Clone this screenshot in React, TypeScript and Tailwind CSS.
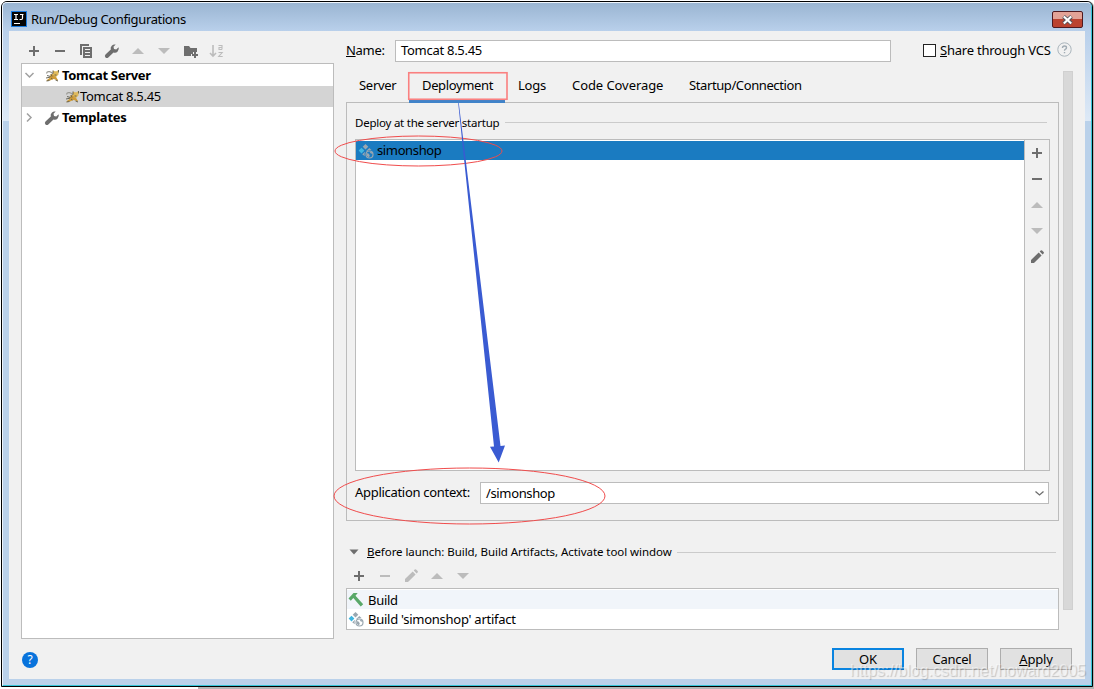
import React from "react";

function T({ className = "tracking-[-0.28px]", children }: { className?: string; children: React.ReactNode }) {
  return <span className={"block whitespace-nowrap " + className}>{children}</span>;
}

function Plus({ className = "text-[#6e6e6e]" }: { className?: string }) {
  return (
    <svg width="16" height="16" viewBox="0 0 16 16" className={className} shapeRendering="crispEdges">
      <path d="M7 3h2v4h4v2H9v4H7V9H3V7h4z" fill="currentColor" />
    </svg>
  );
}
function Minus({ className = "text-[#6e6e6e]" }: { className?: string }) {
  return (
    <svg width="16" height="16" viewBox="0 0 16 16" className={className} shapeRendering="crispEdges">
      <path d="M3 7h10v2H3z" fill="currentColor" />
    </svg>
  );
}
function Up() {
  return (
    <svg width="16" height="16" viewBox="0 0 16 16">
      <path d="M8 5l6 6H2z" fill="#bcbcbc" />
    </svg>
  );
}
function Down() {
  return (
    <svg width="16" height="16" viewBox="0 0 16 16">
      <path d="M8 11L2 5h12z" fill="#bcbcbc" />
    </svg>
  );
}
function Pencil({ className = "text-[#6e6e6e]" }: { className?: string }) {
  return (
    <svg width="16" height="16" viewBox="0 0 16 16" className={className}>
      <path d="M9.700 3.500l2.900 2.900-7.600 7.600H2v-3zM10.700 2.600l1-1a1 1 0 011.400 0l1.500 1.500a1 1 0 010 1.400l-1 1z" fill="currentColor" />
    </svg>
  );
}
function Copy() {
  return (
    <svg width="16" height="16" viewBox="0 0 16 16" fill="#6e6e6e" shapeRendering="crispEdges">
      <path d="M2 1h9v2H4v9H2z" />
      <path fillRule="evenodd" d="M5 4h9v11H5zM7 6v1h5V6zm0 3v1h5V9zm0 3v1h5v-1z" />
    </svg>
  );
}
function Wrench() {
  return (
    <svg width="16" height="16" viewBox="0 0 16 16">
      <path d="M14.600 4.300l-2.400 2.200-2.200-.5-.500-2.200 2.200-2.200A4 4 0 006.800 6.600L1.500 11.600a1.900 1.900 0 002.800 2.800l5.200-5a4 4 0 005.100-5.100z" fill="#6e6e6e" />
    </svg>
  );
}
function FolderPlus() {
  return (
    <svg width="16" height="16" viewBox="0 0 16 16" className="ml-px" fill="#6e6e6e">
      <path d="M1 3h5l1.500 2H14v4h-4v2H8v2H1z" />
      <path d="M11 9h2v2h2v2h-2v2h-2v-2H9v-2h2z" />
    </svg>
  );
}
function SortAZ() {
  return (
    <svg width="16" height="16" viewBox="0 0 16 16">
      <path d="M4 2v11M1 10l3 3.200L7 10" fill="none" stroke="#bcbcbc" strokeWidth="1.600" />
      <path d="M9.500 2.500h3.500v4M13.200 4.500H10v2h3M9.500 9.500h3.700L9.700 13.500h4" fill="none" stroke="#bcbcbc" strokeWidth="1.100" />
    </svg>
  );
}
function Tomcat() {
  return (
    <svg width="14" height="14" viewBox="0 0 14 14">
      <path d="M1.500 4.500Q2 2.200 4.500 2.700T8 5" stroke="#9a9a94" fill="none" strokeWidth="1.200" />
      <path d="M5.500 5.500L8 5l3 2 .500 1.800 1.500 2.200-.5.800-2-1.300-2-.5L5 11.500l-3 .5-.500-.8L4.500 9z" fill="#cf9c38" />
      <path d="M8 1.500l1.600.8h2L13.500 1v4.500L11.500 7.500H9.800L8 5.500z" fill="#dfb95a" />
      <path d="M8 1.500v3M13.500 1v2.500M2 6.500l3.500 1M1 9l4-.8M1.500 12l3-.5M10.500 11l2.500 1M6 5l1 2.500M9.500 6h2M7.500 10L6 9" stroke="#5c5a4c" strokeWidth=".9" fill="none" />
    </svg>
  );
}
function Artifact() {
  return (
    <svg width="16" height="16" viewBox="0 0 16 16">
      <path d="M7.500 1l2.800 2.800-2.800 2.800-2.800-2.800z" fill="#9aa7b0" />
      <path d="M3.500 4.700l2.900 2.900-2.900 2.900L.600 7.600z" fill="#40b6e0" />
      <path d="M11.300 5l2.200 2-3 .3-2 1.200-.3-.5z" fill="#9aa7b0" />
      <path d="M7.200 8.800l-.7 2.200.3 2.200-2.600-2z" fill="#9aa7b0" />
      <circle cx="11.500" cy="11.500" r="3.500" fill="none" stroke="#9aa7b0" strokeWidth="1.200" />
      <path d="M8.500 10l2 .6 1.300 1.600-.8 2.300-2-1.500zM11.500 8.500l1 1.800 2 .7.300-1.500z" fill="#9aa7b0" />
    </svg>
  );
}
function Hammer() {
  return (
    <svg width="16" height="16" viewBox="0 0 16 16">
      <path d="M.500 6.500L5.500 1h4.200L7.500 3.700l7.700 8.600-2.500 2.200L5.300 6 2.800 8.800z" fill="#59a869" />
    </svg>
  );
}
function Rule({ className = "" }: { className?: string }) {
  return <div className={"h-px shrink-0 bg-[#cbcbcb] " + className} />;
}

export default function App() {
  return (
    <div className="relative flex h-[689px] w-[1094px] flex-col overflow-hidden bg-white pl-px pt-px font-['Noto_Sans',sans-serif] text-[13px] leading-[18px] text-black">
      <div className="flex h-[686px] w-[1092px] shrink-0 flex-col rounded-t-[6px] border border-black bg-[#bad1ea] shadow-[1px_0_0_#b4b4b4]">
        <div className="flex h-[684px] flex-col rounded-t-[5px] border border-b-[#36c6d9] border-l-[#eef4fb] border-r-[#36c6d9] border-t-[#eef4fb]">
          <div className="flex h-[28px] shrink-0 items-center rounded-t-[4px] bg-gradient-to-b from-[#9ab5d2] to-[#b9d0eb] px-2">
            <svg width="16" height="16" viewBox="0 0 16 16" className="mt-[3px]">
              <path d="M0 0h16v16H0z" fill="#1a7be0" />
              <path d="M1 1h14v14H1z" fill="#050505" />
              <path d="M3 3.500h4M5 3.500v5M3 8.500h4M9 3.500h3.500M11.500 3.500v3.800q0 1.200-1.200 1.200H8.500M3 12.500h6" stroke="#fff" strokeWidth="1.200" fill="none" />
            </svg>
            <T className="ml-1 mt-[3px] tracking-[-0.37px]">Run/Debug Configurations</T>
            <div className="ml-auto mt-[5px] flex h-[17px] w-[31px] items-center justify-center rounded-[2px] border border-[#4f1a20] bg-gradient-to-b from-[#e3a397] from-45% to-[#bb4330] to-50%">
              <svg width="13" height="10" viewBox="0 0 13 10">
                <path d="M2.500 1.500l8 7M10.500 1.500l-8 7" stroke="#54565f" strokeWidth="4" />
                <path d="M2.800 1.500l7.400 7M10.200 1.500l-7.400 7" stroke="#fff" strokeWidth="2.200" />
              </svg>
            </div>
          </div>
          <div className="flex h-[654px] w-full">
            <div className="h-[90px] w-[6px] shrink-0 bg-gradient-to-b from-[#b9d0eb] to-[#dde9f6]" />
            <div className="flex h-[648px] w-[1076px] flex-col bg-[#f1f1f1]">
              <div className="flex h-[608px]">
                <div className="ml-3 flex w-[313px] flex-col">
                  <div className="flex h-8 items-center gap-[10px] pl-[5px] pt-[7px]">
                    <Plus /><Minus /><Copy /><Wrench /><Up /><Down /><FolderPlus /><SortAZ />
                  </div>
                  <div className="flex h-[576px] flex-col border border-[#bcbcbc] bg-white pt-px">
                    <div className="flex h-[21px] items-center pl-[2px]">
                      <svg width="11" height="11" viewBox="0 0 11 11"><path d="M1.500 3l4 4 4-4" fill="none" stroke="#a0a0a0" strokeWidth="1.500" /></svg>
                      <span className="ml-[10px]"><Tomcat /></span>
                      <T className="-mt-[2px] ml-[3px] font-bold tracking-[-0.3px]">Tomcat Server</T>
                    </div>
                    <div className="flex h-[21px] items-center bg-[#d4d4d4] pl-[43px]">
                      <Tomcat />
                      <T className="-mt-[2px] ml-px tracking-[-0.28px]">Tomcat 8.5.45</T>
                    </div>
                    <div className="flex h-[21px] items-center pl-[2px]">
                      <svg width="11" height="11" viewBox="0 0 11 11"><path d="M3 1.500l4 4-4 4" fill="none" stroke="#a0a0a0" strokeWidth="1.500" /></svg>
                      <span className="ml-[9px]"><Wrench /></span>
                      <T className="-mt-[2px] ml-[2px] font-bold tracking-[-0.25px]">Templates</T>
                    </div>
                  </div>
                </div>
                <div className="ml-3 flex w-[739px] flex-col">
                  <div className="flex h-[40px] shrink-0 items-start pt-[9px]">
                    <T className="w-[49px] pt-px tracking-[-0.3px]"><u>N</u>ame:</T>
                    <div className="h-[22px] w-[496px] border border-[#bcbcbc] bg-white pl-[5px]"><T>Tomcat 8.5.45</T></div>
                    <div className="ml-8 mt-1 h-[13px] w-[13px] border border-[#222] bg-white" />
                    <T className="ml-1 w-[117px] pt-px tracking-[-0.23px]"><u>S</u>hare through VCS</T>
                    <svg width="15" height="15" viewBox="0 0 15 15" className="mt-[2px]">
                      <circle cx="7.500" cy="7.500" r="6.700" fill="none" stroke="#a9b4bb" strokeWidth="1" />
                      <path d="M5.500 6q0-2 2-2t2 1.700q0 1-1 1.500t-1 1.500M7.500 10v1.300" fill="none" stroke="#a0abb3" strokeWidth="1.400" />
                    </svg>
                  </div>
                  <div className="flex h-[559px] items-start">
                    <div className="flex h-[559px] w-[713px] flex-col">
                      <div className="flex h-[31px] shrink-0 pt-[5px]">
                        <T className="ml-[13px] w-[50px] tracking-[-0.28px]">Server</T>
                        <div className="relative h-[27px] w-[96px] border-b-3 border-[#4083c9] pl-[13px]"><T className="tracking-[-0.36px]">Deployment</T></div>
                        <T className="ml-[13px] w-[54px] tracking-[-0.2px]">Logs</T>
                        <T className="w-[117px] tracking-[-0.07px]">Code Coverage</T>
                        <T className="tracking-[-0.4px]">Startup/Connection</T>
                      </div>
                      <div className="flex h-[419px] shrink-0 flex-col border border-[#bcbcbc] px-2">
                        <div className="flex h-9 shrink-0 items-center">
                          <T className="mt-[3px] w-[150px] text-[11.5px] tracking-[-0.23px]">Deploy at the server startup</T>
                          <Rule className="mt-[3px] w-[542px]" />
                        </div>
                        <div className="flex h-[332px] w-[695px] shrink-0 border border-[#bcbcbc]">
                          <div className="w-[668px] bg-white pt-px">
                            <div className="flex h-[19px] items-center bg-[#1a7bc1] pl-[2px]">
                              <Artifact />
                              <T className="-mt-px ml-[3px] tracking-[-0.37px]">simonshop</T>
                            </div>
                          </div>
                          <div className="flex w-[25px] flex-col items-center gap-[10px] border-l border-[#bcbcbc] pt-[5px]">
                            <Plus /><Minus /><Up /><Down /><Pencil />
                          </div>
                        </div>
                        <div className="mt-[11px] flex h-[22px]">
                          <T className="w-[125px] pt-px tracking-[-0.3px]">Application context:</T>
                          <div className="flex h-[22px] w-[569px] items-center justify-between border border-[#bcbcbc] bg-white pl-[5px] pr-[3px]">
                            <T className="-mt-px tracking-[-0.36px]">/simonshop</T>
                            <svg width="11" height="9" viewBox="0 0 11 9"><path d="M1.500 2.500l4 3.500 4-3.500" fill="none" stroke="#6e6e6e" strokeWidth="1.300" /></svg>
                          </div>
                        </div>
                      </div>
                      <div className="mt-[21px] flex h-[20px] items-center">
                        <svg width="16" height="16" viewBox="0 0 16 16"><path d="M3.500 5.500h9L8 10.500z" fill="#6e6e6e" /></svg>
                        <T className="ml-[5px] w-[310px] text-[11.5px] tracking-[-0.06px]"><u>B</u>efore launch: Build, Build Artifacts, Activate tool window</T>
                        <Rule className="w-[379px]" />
                      </div>
                      <div className="flex h-[26px] items-center gap-[10px] pl-[5px] pt-[2px]">
                        <Plus /><Minus className="text-[#bcbcbc]" /><Pencil className="text-[#bcbcbc]" /><Up /><Down />
                      </div>
                      <div className="h-[42px] border border-[#bcbcbc] bg-white pt-px">
                        <div className="flex h-[19px] items-center bg-[#f1f5fa] pl-px"><Hammer /><T className="ml-1 tracking-[-0.3px]">Build</T></div>
                        <div className="flex h-[19px] items-center pl-px"><Artifact /><T className="ml-1 tracking-[-0.26px]">Build 'simonshop' artifact</T></div>
                      </div>
                    </div>
                    <div className="ml-1 h-[539px] w-[10px] border border-[#d0d0d0] bg-[#d8d8d8]" />
                  </div>
                </div>
              </div>
              <div className="flex h-10 items-start pl-[13px] pt-[9px]">
                <div className="mt-1 flex h-4 w-4 items-center justify-center rounded-full bg-[#0873dc] text-[12px] text-white"><span>?</span></div>
                <div className="ml-auto mr-[13px] flex gap-3">
                  <div className="flex h-[22px] w-[72px] items-center justify-center border-2 border-[#0a84e0] bg-[#e1e1e1]"><T className="-mt-px">OK</T></div>
                  <div className="flex h-[22px] w-[72px] items-center justify-center border border-[#adadad] bg-[#e1e1e1]"><T className="-mt-px tracking-[-0.25px]">Cancel</T></div>
                  <div className="flex h-[22px] w-[72px] items-center justify-center border border-[#adadad] bg-[#e1e1e1]"><T className="-mt-px tracking-[-0.15px]"><u>A</u>pply</T></div>
                </div>
              </div>
            </div>
            <div className="h-[90px] w-[6px] shrink-0 bg-gradient-to-b from-[#b9d0eb] to-[#dde9f6]" />
          </div>
        </div>
      </div>
      <div className="ml-[197px] h-[2px] shrink-0 bg-[#b4b4b4]" />
      <svg className="pointer-events-none absolute left-0 top-0" width="1094" height="689" viewBox="0 0 1094 689">
        <rect x="408.750" y="72.750" width="98.250" height="26.500" fill="none" stroke="#fa8080" strokeWidth="1.600" />
        <ellipse cx="418.500" cy="151" rx="83.500" ry="15" fill="none" stroke="#f04c4c" />
        <ellipse cx="469.500" cy="496" rx="135.500" ry="28" fill="none" stroke="#f04c4c" />
        <path d="M458.200 103L494 446.500l-4 .3 8.700 15.700 6.300-17-4.500.5L458.800 103z" fill="#3a5bd2" />
      </svg>
      <T className="absolute left-[850px] top-[662px] font-['Liberation_Sans',sans-serif] text-[16px] text-white/50 [text-shadow:1px_1px_1px_rgba(0,0,0,0.2)]">https://blog.csdn.net/howard2005</T>
    </div>
  );
}
